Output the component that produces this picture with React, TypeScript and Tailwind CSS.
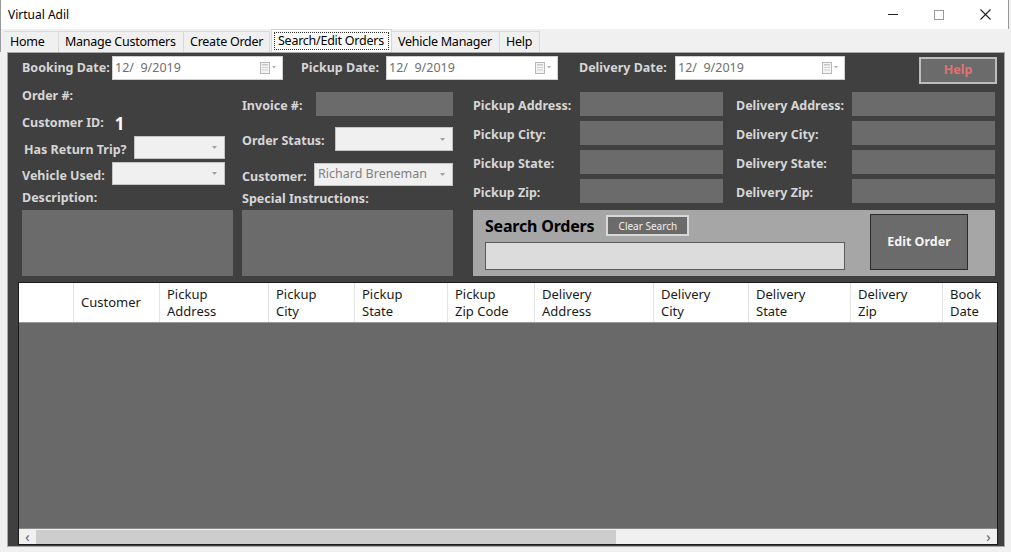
import React from 'react';

const FONT = "font-['Noto_Sans','Liberation_Sans',sans-serif]";

const tabs = [
    { label: 'Home', w: 'w-[55px]' },
    { label: 'Manage Customers', w: 'w-[125px]' },
    { label: 'Create Order', w: 'w-[86px]' },
    { label: 'Search/Edit Orders', w: 'w-[121px]', active: true },
    { label: 'Vehicle Manager', w: 'w-[108px]' },
    { label: 'Help', w: 'w-[40px]' },
];

const columns = [
    { title: '', w: 'w-[55px]' },
    { title: 'Customer', w: 'w-[86px]' },
    { title: 'Pickup\nAddress', w: 'w-[109px]' },
    { title: 'Pickup\nCity', w: 'w-[86px]' },
    { title: 'Pickup\nState', w: 'w-[93px]' },
    { title: 'Pickup\nZip Code', w: 'w-[87px]' },
    { title: 'Delivery\nAddress', w: 'w-[119px]' },
    { title: 'Delivery\nCity', w: 'w-[95px]' },
    { title: 'Delivery\nState', w: 'w-[102px]' },
    { title: 'Delivery\nZip', w: 'w-[92px]' },
    { title: 'Book\nDate', w: 'w-[80px]' },
];

const addressRows = [
    ['Pickup Address:', 'Delivery Address:'],
    ['Pickup City:', 'Delivery City:'],
    ['Pickup State:', 'Delivery State:'],
    ['Pickup Zip:', 'Delivery Zip:'],
];

const Label = ({ children, className = '' }: { children: React.ReactNode; className?: string }) => (
    <span className={`text-[12.5px] font-bold text-[#d6d6d6] leading-none whitespace-nowrap ${className}`}>{children}</span>
);

const CalendarIcon = () => (
    <svg width="18" height="12" viewBox="0 0 18 12" className="shrink-0">
        <rect x="0.5" y="0.5" width="9" height="11" fill="#f4f4f4" stroke="#b8b8b8" />
        <rect x="2" y="2" width="6" height="1.5" fill="#c8c8c8" />
        <rect x="2" y="5" width="6" height="1" fill="#d2d2d2" />
        <rect x="2" y="7.5" width="6" height="1" fill="#d2d2d2" />
        <path d="M12 4 L16 4 L14 6.5 Z" fill="#b0b0b0" />
    </svg>
);

const DateBox = ({ w }: { w: string }) => (
    <div className={`${w} h-[24px] bg-white border border-[#d0d0d0] flex items-center justify-between pl-[2px] pr-[4px]`}>
        <span className="text-[12.5px] text-[#707070] whitespace-pre">12/  9/2019</span>
        <CalendarIcon />
    </div>
);

const Combo = ({ w, value = '' }: { w: string; value?: string }) => (
    <div className={`${w} h-[23px] bg-[#f0f0f0] border border-[#c4c4c4] flex items-center justify-between pl-[3px] pr-[7px]`}>
        <span className="text-[12.5px] text-[#808080] whitespace-nowrap">{value}</span>
        <svg width="5" height="3" viewBox="0 0 5 3">
            <path d="M0 0 L5 0 L2.5 3 Z" fill="#a0a0a0" />
        </svg>
    </div>
);

const Field = ({ w }: { w: string }) => <div className={`${w} h-[24px] bg-[#6b6b6b]`} />;

export default function App() {
    return (
        <div className={`w-[1011px] h-[552px] bg-[#f0f0f0] overflow-hidden ${FONT} flex flex-col`}>
            {/* title bar */}
            <div className="h-[29px] bg-white flex items-center shrink-0 border-l border-[#9a9a9a] mr-[2px] border-r">
                <span className="pl-[7px] text-[12px] text-black flex-1">Virtual Adil</span>
                <div className="flex items-center h-full">
                    <div className="w-[46px] flex justify-center">
                        <div className="w-[10px] h-[1px] bg-[#222]" />
                    </div>
                    <div className="w-[46px] flex justify-center">
                        <div className="w-[10px] h-[10px] border border-[#999]" />
                    </div>
                    <div className="w-[46px] flex justify-center">
                        <svg width="11" height="11" viewBox="0 0 11 11">
                            <path d="M0.5 0.5 L10.5 10.5 M10.5 0.5 L0.5 10.5" stroke="#222" strokeWidth="1.1" />
                        </svg>
                    </div>
                </div>
            </div>

            {/* tabs */}
            <div className="h-[23px] flex items-end pl-[3px] shrink-0 border-l border-[#9a9a9a]">
                {tabs.map((t) =>
                    t.active ? (
                        <div key={t.label} className={`${t.w} h-[23px] bg-[#fbfbfb] border border-[#d6d6d6] border-b-0 p-[2px] ml-[1px]`}>
                            <div className="h-full border border-dotted border-[#333] flex items-center pl-[3px] text-[12.5px] tracking-[-0.25px] text-black whitespace-nowrap">
                                {t.label}
                            </div>
                        </div>
                    ) : (
                        <div
                            key={t.label}
                            className={`${t.w} h-[21px] border-r border-[#dadada] border-t bg-[#f0f0f0] flex items-center pl-[6px] text-[12.5px] tracking-[-0.25px] text-black whitespace-nowrap`}
                        >
                            {t.label}
                        </div>
                    ),
                )}
            </div>

            {/* main panel */}
            <div className="ml-[7px] w-[998px] h-[495px] bg-[#404040] border border-[#a8a8a8] pl-[14px] pt-[3px] flex flex-col">
                {/* dates row */}
                <div className="flex items-start h-[29px]">
                    <div className="w-[90px] h-[25px] flex items-center">
                        <Label>Booking Date:</Label>
                    </div>
                    <DateBox w="w-[171px]" />
                    <div className="ml-[18px] w-[85px] h-[25px] flex items-center">
                        <Label>Pickup Date:</Label>
                    </div>
                    <DateBox w="w-[172px]" />
                    <div className="ml-[21px] w-[96px] h-[25px] flex items-center">
                        <Label>Delivery Date:</Label>
                    </div>
                    <DateBox w="w-[170px]" />
                    <button className="ml-[74px] mt-[1px] w-[78px] h-[27px] bg-[#6b6b6b] border-2 border-[#bdbdbd] text-[12.5px] font-bold text-[#e07272]">
                        Help
                    </button>
                </div>

                {/* form section */}
                <div className="flex mt-[1px]">
                    {/* left column */}
                    <div className="w-[211px] flex flex-col">
                        <div className="h-[20px] flex items-center">
                            <Label>Order #:</Label>
                        </div>
                        <div className="h-[20px] mt-[7px] flex items-center">
                            <Label>Customer ID:</Label>
                            <span className="ml-[11px] text-[17px] font-bold text-white leading-none">1</span>
                        </div>
                        <div className="h-[23px] mt-[3px] flex items-center">
                            <div className="w-[112px] pl-[2px]">
                                <Label>Has Return Trip?</Label>
                            </div>
                            <Combo w="w-[91px]" />
                        </div>
                        <div className="h-[23px] mt-[3px] flex items-center">
                            <div className="w-[90px]">
                                <Label>Vehicle Used:</Label>
                            </div>
                            <Combo w="w-[113px]" />
                        </div>
                        <div className="h-[18px] mt-[4px] flex items-center">
                            <Label>Description:</Label>
                        </div>
                        <div className="h-[66px] mt-[3px] bg-[#6b6b6b]" />
                    </div>

                    {/* middle column */}
                    <div className="w-[211px] ml-[9px] flex flex-col">
                        <div className="h-[24px] mt-[6px] flex items-center">
                            <div className="w-[74px]">
                                <Label>Invoice #:</Label>
                            </div>
                            <Field w="w-[137px]" />
                        </div>
                        <div className="h-[24px] mt-[11px] flex items-center">
                            <div className="w-[93px]">
                                <Label>Order Status:</Label>
                            </div>
                            <Combo w="w-[118px] !h-[24px]" />
                        </div>
                        <div className="h-[23px] mt-[12px] flex items-center">
                            <div className="w-[72px]">
                                <Label>Customer:</Label>
                            </div>
                            <Combo w="w-[139px]" value="Richard Breneman" />
                        </div>
                        <div className="h-[18px] mt-[4px] flex items-center">
                            <Label>Special Instructions:</Label>
                        </div>
                        <div className="h-[66px] mt-[2px] bg-[#6b6b6b]" />
                    </div>

                    {/* right column */}
                    <div className="w-[522px] ml-[20px] flex flex-col">
                        <div className="mt-[6px] flex flex-col gap-[5px]">
                            {addressRows.map(([a, b]) => (
                                <div key={a} className="h-[24px] flex items-center">
                                    <div className="w-[107px]">
                                        <Label>{a}</Label>
                                    </div>
                                    <Field w="w-[143px]" />
                                    <div className="ml-[13px] w-[116px]">
                                        <Label>{b}</Label>
                                    </div>
                                    <Field w="w-[143px]" />
                                </div>
                            ))}
                        </div>

                        {/* search panel */}
                        <div className="mt-[7px] h-[66px] bg-[#a6a6a6] flex pl-[12px]">
                            <div className="flex flex-col pt-[5px]">
                                <div className="flex items-center h-[21px]">
                                    <span className="text-[16px] font-bold text-black leading-none tracking-[-0.2px]">Search Orders</span>
                                    <button className="ml-[12px] w-[83px] h-[21px] bg-[#6b6b6b] border-2 border-[#d8d8d8] text-[10px] text-[#f0f0f0] leading-none">
                                        Clear Search
                                    </button>
                                </div>
                                <div className="mt-[6px] w-[360px] h-[28px] bg-[#dcdcdc] border border-[#5a5a5a]" />
                            </div>
                            <button className="ml-[25px] mt-[4px] w-[98px] h-[56px] bg-[#6b6b6b] border border-[#2a2a2a] text-[12.5px] font-bold text-[#f4f4f4]">
                                Edit Order
                            </button>
                        </div>
                    </div>
                </div>

                {/* grid */}
                <div className="mt-[6px] -ml-[4px] w-[980px] h-[263px] border border-[#1a1a1a] bg-[#696969] flex flex-col overflow-hidden">
                    <div className="h-[40px] bg-white flex border-b border-[#9a9a9a] shrink-0">
                        {columns.map((c, i) => (
                            <div
                                key={i}
                                className={`${c.w} shrink-0 h-full border-r border-[#e3e3e3] flex items-center pl-[7px] text-[13px] leading-[17px] text-[#1a1a1a] whitespace-pre ${i === 0 ? 'border-[#a0a0a0]' : ''}`}
                            >
                                {c.title}
                            </div>
                        ))}
                    </div>
                    <div className="flex-1" />
                    <div className="h-[16px] bg-[#f0f0f0] flex items-center shrink-0 border-t border-[#8a8a8a]">
                        <span className="w-[17px] text-center text-[14px] text-[#606060] leading-none">‹</span>
                        <div className="w-[580px] h-[14px] bg-[#cdcdcd]" />
                        <div className="flex-1" />
                        <span className="w-[17px] text-center text-[14px] text-[#606060] leading-none">›</span>
                    </div>
                </div>
            </div>
        </div>
    );
}
